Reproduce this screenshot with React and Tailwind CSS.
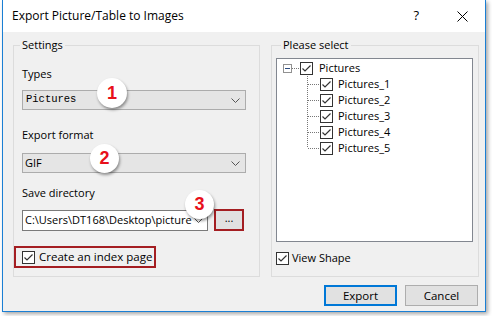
import React from "react";

const font = { fontFamily: '"Open Sans", "Liberation Sans", sans-serif' };

function Check() {
  return (
    <span className="flex w-[13px] h-[13px] shrink-0 items-center justify-center border border-[#333] bg-white">
      <svg width="11" height="11" viewBox="0 0 11 11">
        <polyline points="1.5,5.5 4,8 9.5,2.5" fill="none" stroke="#333" strokeWidth="1.2" />
      </svg>
    </span>
  );
}

function Chevron() {
  return (
    <svg width="9" height="5" viewBox="0 0 9 5" className="shrink-0">
      <polyline points="0.5,0.5 4.5,4.5 8.5,0.5" fill="none" stroke="#555" strokeWidth="1" />
    </svg>
  );
}

function Badge({ n, className }) {
  return (
    <div
      className={`absolute flex items-center justify-center rounded-full bg-white shadow-[1px_2px_3px_rgba(0,0,0,0.4)] text-[18px] font-bold text-[#e8101b] ${className}`}
      style={{ fontFamily: '"Liberation Sans", Arial, sans-serif' }}
    >
      {n}
    </div>
  );
}

function Connector({ last }) {
  return (
    <svg width="13" height="16" viewBox="0 0 13 16" className="shrink-0">
      <line x1="0.5" y1="0" x2="0.5" y2={last ? 8 : 16} stroke="#777" strokeDasharray="1 1" />
      <line x1="1" y1="8.5" x2="13" y2="8.5" stroke="#777" strokeDasharray="1 1" />
    </svg>
  );
}

export default function App() {
  const items = ["Pictures_1", "Pictures_2", "Pictures_3", "Pictures_4", "Pictures_5"];

  return (
    <div className="relative w-[492px] h-[316px] bg-white overflow-hidden text-[11px] text-black" style={font}>
      <div className="ml-[2px] w-[484px] h-[312px] flex flex-col border-x border-b border-[#1a7fd4] shadow-[2px_2px_4px_rgba(0,0,0,0.35)]">
        {/* title bar */}
        <div className="h-[32px] flex items-center bg-white pl-[9px] pr-[17px]">
          <span className="text-[12px] leading-[14px]">Export Picture/Table to Images</span>
          <span className="ml-auto mr-[38px] text-[13px]">?</span>
          <svg width="11" height="11" viewBox="0 0 11 11">
            <path d="M0.5 0.5 L10.5 10.5 M10.5 0.5 L0.5 10.5" stroke="#000" strokeWidth="1" />
          </svg>
        </div>

        {/* body */}
        <div className="flex-1 bg-[#f0f0f0] pt-[6px] pl-[10px]">
          <div className="flex gap-[11px]">
            <fieldset className="w-[247px] h-[239px] border border-[#dcdcdc] px-[8px]">
              <legend className="ml-[-2px] px-[2px] leading-[14px]">Settings</legend>
              <div className="mt-[15px] leading-[14px]">Types</div>
              <div className="mt-[9px] w-[224px] h-[20px] flex items-center justify-between border border-[#acacac] bg-[#e5e5e5] pl-[3px] pr-[5px]">
                <span className="text-[10.5px]" style={{ fontFamily: '"Liberation Mono", monospace' }}>Pictures</span>
                <Chevron />
              </div>
              <div className="mt-[18px] leading-[14px]">Export format</div>
              <div className="mt-[11px] w-[224px] h-[20px] flex items-center justify-between border border-[#acacac] bg-[#e5e5e5] pl-[2px] pr-[5px]">
                <span>GIF</span>
                <Chevron />
              </div>
              <div className="mt-[13px] leading-[14px]">Save directory</div>
              <div className="mt-[10px] flex items-start gap-[6px]">
                <div className="w-[186px] h-[21px] flex items-center border border-[#7a7a7a] bg-white pl-[2px] pr-[4px]">
                  <span className="whitespace-nowrap">C:\Users\DT168\Desktop\picture</span>
                  <span className="ml-auto"><Chevron /></span>
                </div>
                <div className="mt-[-1px] w-[30px] h-[22px] flex items-center justify-center border-2 border-[#a41e22] bg-[#e1e1e1] pb-[3px]">
                  ...
                </div>
              </div>
              <div className="mt-[15px] ml-[-8px] w-[142px] h-[22px] flex items-center gap-[4px] border-2 border-[#a41e22] pl-[6px]">
                <Check />
                <span className="whitespace-nowrap text-[11.5px]">Create an index page</span>
              </div>
            </fieldset>

            <fieldset className="w-[208px] h-[239px] border border-[#dcdcdc] pl-[4px]">
              <legend className="ml-[5px] px-[2px] leading-[14px]">Please select</legend>
              <div className="mt-[6px] w-[197px] h-[184px] border border-[#828790] bg-white pt-[1px] pl-[6px]">
                <div className="h-[16px] flex items-center">
                  <span className="flex w-[9px] h-[9px] items-center justify-center border border-[#919191]">
                    <span className="w-[5px] h-px bg-[#2b4a7e]" />
                  </span>
                  <svg width="8" height="1" className="shrink-0">
                    <line x1="0" y1="0.5" x2="8" y2="0.5" stroke="#777" strokeDasharray="1 1" />
                  </svg>
                  <Check />
                  <span className="ml-[6px] whitespace-nowrap">Pictures</span>
                </div>
                {items.map((t, i) => (
                  <div key={t} className="h-[16px] flex items-center pl-[24px]">
                    <Connector last={i === items.length - 1} />
                    <Check />
                    <span className="ml-[5px] whitespace-nowrap">{t}</span>
                  </div>
                ))}
              </div>
              <div className="mt-[8px] flex items-center gap-[3px]">
                <Check />
                <span>View Shape</span>
              </div>
            </fieldset>
          </div>

          <div className="mt-[8px] flex justify-end gap-[8px] pr-[7px]">
            <button className="w-[73px] h-[21px] border-2 border-[#0078d7] bg-[#e1e1e1] text-[11.5px]">Export</button>
            <button className="w-[73px] h-[21px] border border-[#adadad] bg-[#e1e1e1] text-[11.5px]">Cancel</button>
          </div>
        </div>
      </div>

      <Badge n="1" className="left-[97px] top-[78px] w-[30px] h-[30px]" />
      <Badge n="2" className="left-[90px] top-[144px] w-[29px] h-[29px]" />
      <Badge n="3" className="left-[185px] top-[190px] w-[29px] h-[29px]" />
    </div>
  );
}
